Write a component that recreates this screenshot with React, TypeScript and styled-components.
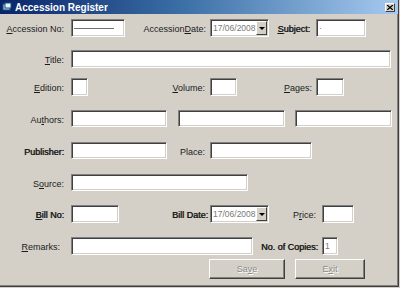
import styled, { createGlobalStyle } from "styled-components";

const GlobalStyle = createGlobalStyle`
    html, body {
        margin: 0;
        padding: 0;
        background: #d4d0c8;
    }
`;

const Window = styled.div`
    width: 399px;
    height: 287px;
    box-sizing: border-box;
    background: #d4d0c8;
    border-right: 1px solid #404040;
    border-bottom: 1px solid #404040;
    box-shadow: inset -1px -1px 0 #808080;
    font-family: "Liberation Sans", Arial, sans-serif;
    font-size: 9px;
    color: #000;
    overflow: hidden;
`;

const TitleBar = styled.div`
    height: 14px;
    display: flex;
    align-items: center;
    padding: 0 2px;
    background: linear-gradient(to right, #0a246a, #3a6ea5 45%, #a6caf0);
`;

const TitleText = styled.span`
    color: #fff;
    font-weight: bold;
    font-size: 10px;
    margin-left: 3px;
    flex: 1;
`;

const CloseButton = styled.div`
    width: 10px;
    height: 9px;
    box-sizing: border-box;
    margin-right: 1px;
    background: #d4d0c8;
    border: 1px solid;
    border-color: #fff #404040 #404040 #fff;
    display: flex;
    align-items: center;
    justify-content: center;
`;

const Form = styled.div`
    display: flex;
    flex-direction: column;
`;

const Row = styled.div<{ $mt: number; $h: number }>`
    display: flex;
    align-items: center;
    margin-top: ${(p) => p.$mt}px;
    height: ${(p) => p.$h}px;
`;

// the darker labels of the original are faux-bolded so they keep the regular widths
const Label = styled.label<{ $w: number; $pr: number; $bold?: boolean }>`
    width: ${(p) => p.$w}px;
    padding-right: ${(p) => p.$pr}px;
    padding-top: 2px;
    box-sizing: border-box;
    text-align: right;
    white-space: nowrap;
    color: #1a1a1a;
    text-shadow: ${(p) => (p.$bold ? "0.6px 0 0 #1a1a1a" : "none")};
`;

const Field = styled.div<{ $w: number }>`
    width: ${(p) => p.$w}px;
    height: 100%;
    box-sizing: border-box;
    background: #fff;
    border: 1px solid;
    border-color: #808080 #fff #fff #808080;
    box-shadow: inset 1px 1px 0 #404040, inset -1px -1px 0 #d4d0c8;
    display: flex;
    align-items: center;
    position: relative;
    flex-shrink: 0;
    overflow: hidden;
`;

const Gap = styled.div<{ $w: number }>`
    width: ${(p) => p.$w}px;
    flex-shrink: 0;
`;

const FieldText = styled.span`
    padding-left: 2px;
    color: #7a7a7a;
    font-size: 8.5px;
    white-space: nowrap;
`;

const DashLine = styled.span`
    margin-left: 2px;
    width: 40px;
    border-top: 1px solid #707070;
`;

const DropButton = styled.div`
    position: absolute;
    right: 1px;
    top: 1px;
    bottom: 1px;
    width: 11px;
    box-sizing: border-box;
    background: #d4d0c8;
    border: 1px solid;
    border-color: #fff #404040 #404040 #fff;
    display: flex;
    align-items: center;
    justify-content: center;
`;

const Arrow = styled.span`
    width: 0;
    height: 0;
    border-left: 3px solid transparent;
    border-right: 3px solid transparent;
    border-top: 3px solid #000;
`;

const ButtonRow = styled.div`
    display: flex;
    margin-top: 4px;
    height: 20px;
    padding-left: 209px;
`;

const Button = styled.div<{ $w: number; $ml?: number }>`
    width: ${(p) => p.$w}px;
    margin-left: ${(p) => p.$ml ?? 0}px;
    box-sizing: border-box;
    background: #d4d0c8;
    border: 1px solid;
    border-color: #fff #404040 #404040 #fff;
    box-shadow: inset -1px -1px 0 #808080;
    display: flex;
    align-items: center;
    justify-content: center;
    color: #8a8a8a;
    text-shadow: 1px 1px 0 #fff;
`;

const U = styled.u`
    text-decoration: underline;
`;

function DateField({ w }: { w: number }) {
    return (
        <Field $w={w}>
            <FieldText>17/06/2008</FieldText>
            <DropButton>
                <Arrow />
            </DropButton>
        </Field>
    );
}

export default function App() {
    return (
        <>
            <GlobalStyle />
            <Window>
                <TitleBar>
                    <svg width="10" height="10" viewBox="0 0 10 10">
                        <rect x="1" y="2" width="7" height="6" fill="#9fd4e8" stroke="#1c4f7a" strokeWidth="1" />
                        <rect x="3" y="1" width="6" height="5" fill="#e6f4fa" stroke="#1c4f7a" strokeWidth="1" />
                    </svg>
                    <TitleText>Accession Register</TitleText>
                    <CloseButton>
                        <svg width="6" height="5" viewBox="0 0 6 5">
                            <path d="M0 0 L6 5 M6 0 L0 5" stroke="#000" strokeWidth="1.3" />
                        </svg>
                    </CloseButton>
                </TitleBar>
                <Form>
                    <Row $mt={5} $h={18}>
                        <Label $w={71} $pr={7}><U>A</U>ccession No:</Label>
                        <Field $w={54}><DashLine /></Field>
                        <Label $w={85} $pr={4}>Accession<U>D</U>ate:</Label>
                        <DateField w={59} />
                        <Label $w={47} $pr={6} $bold><U>S</U>ubject:</Label>
                        <Field $w={50}><FieldText>·</FieldText></Field>
                    </Row>
                    <Row $mt={13} $h={18}>
                        <Label $w={71} $pr={7}><U>T</U>itle:</Label>
                        <Field $w={320} />
                    </Row>
                    <Row $mt={10} $h={18}>
                        <Label $w={71} $pr={7}><U>E</U>dition:</Label>
                        <Field $w={17} />
                        <Label $w={122} $pr={5}><U>V</U>olume:</Label>
                        <Field $w={27} />
                        <Label $w={79} $pr={4}><U>P</U>ages:</Label>
                        <Field $w={28} />
                    </Row>
                    <Row $mt={14} $h={17}>
                        <Label $w={71} $pr={7}>Au<U>t</U>hors:</Label>
                        <Field $w={96} />
                        <Gap $w={11} />
                        <Field $w={107} />
                        <Gap $w={10} />
                        <Field $w={97} />
                    </Row>
                    <Row $mt={15} $h={17}>
                        <Label $w={71} $pr={7} $bold>Publisher:</Label>
                        <Field $w={96} />
                        <Label $w={43} $pr={5}>Place:</Label>
                        <Field $w={102} />
                    </Row>
                    <Row $mt={15} $h={17}>
                        <Label $w={71} $pr={7}>S<U>o</U>urce:</Label>
                        <Field $w={177} />
                    </Row>
                    <Row $mt={14} $h={18}>
                        <Label $w={71} $pr={7} $bold><U>B</U>ill No:</Label>
                        <Field $w={48} />
                        <Label $w={91} $pr={2} $bold>Bill Date:</Label>
                        <DateField w={59} />
                        <Label $w={53} $pr={6}>P<U>r</U>ice:</Label>
                        <Field $w={32} />
                    </Row>
                    <Row $mt={14} $h={18}>
                        <Label $w={71} $pr={11}><U>R</U>emarks:</Label>
                        <Field $w={182} />
                        <Label $w={69} $pr={4} $bold>No. of Copies:</Label>
                        <Field $w={16}><FieldText>1</FieldText></Field>
                    </Row>
                    <ButtonRow>
                        <Button $w={76}>Sa<U>v</U>e</Button>
                        <Button $w={70} $ml={10}>E<U>x</U>it</Button>
                    </ButtonRow>
                </Form>
            </Window>
        </>
    );
}
